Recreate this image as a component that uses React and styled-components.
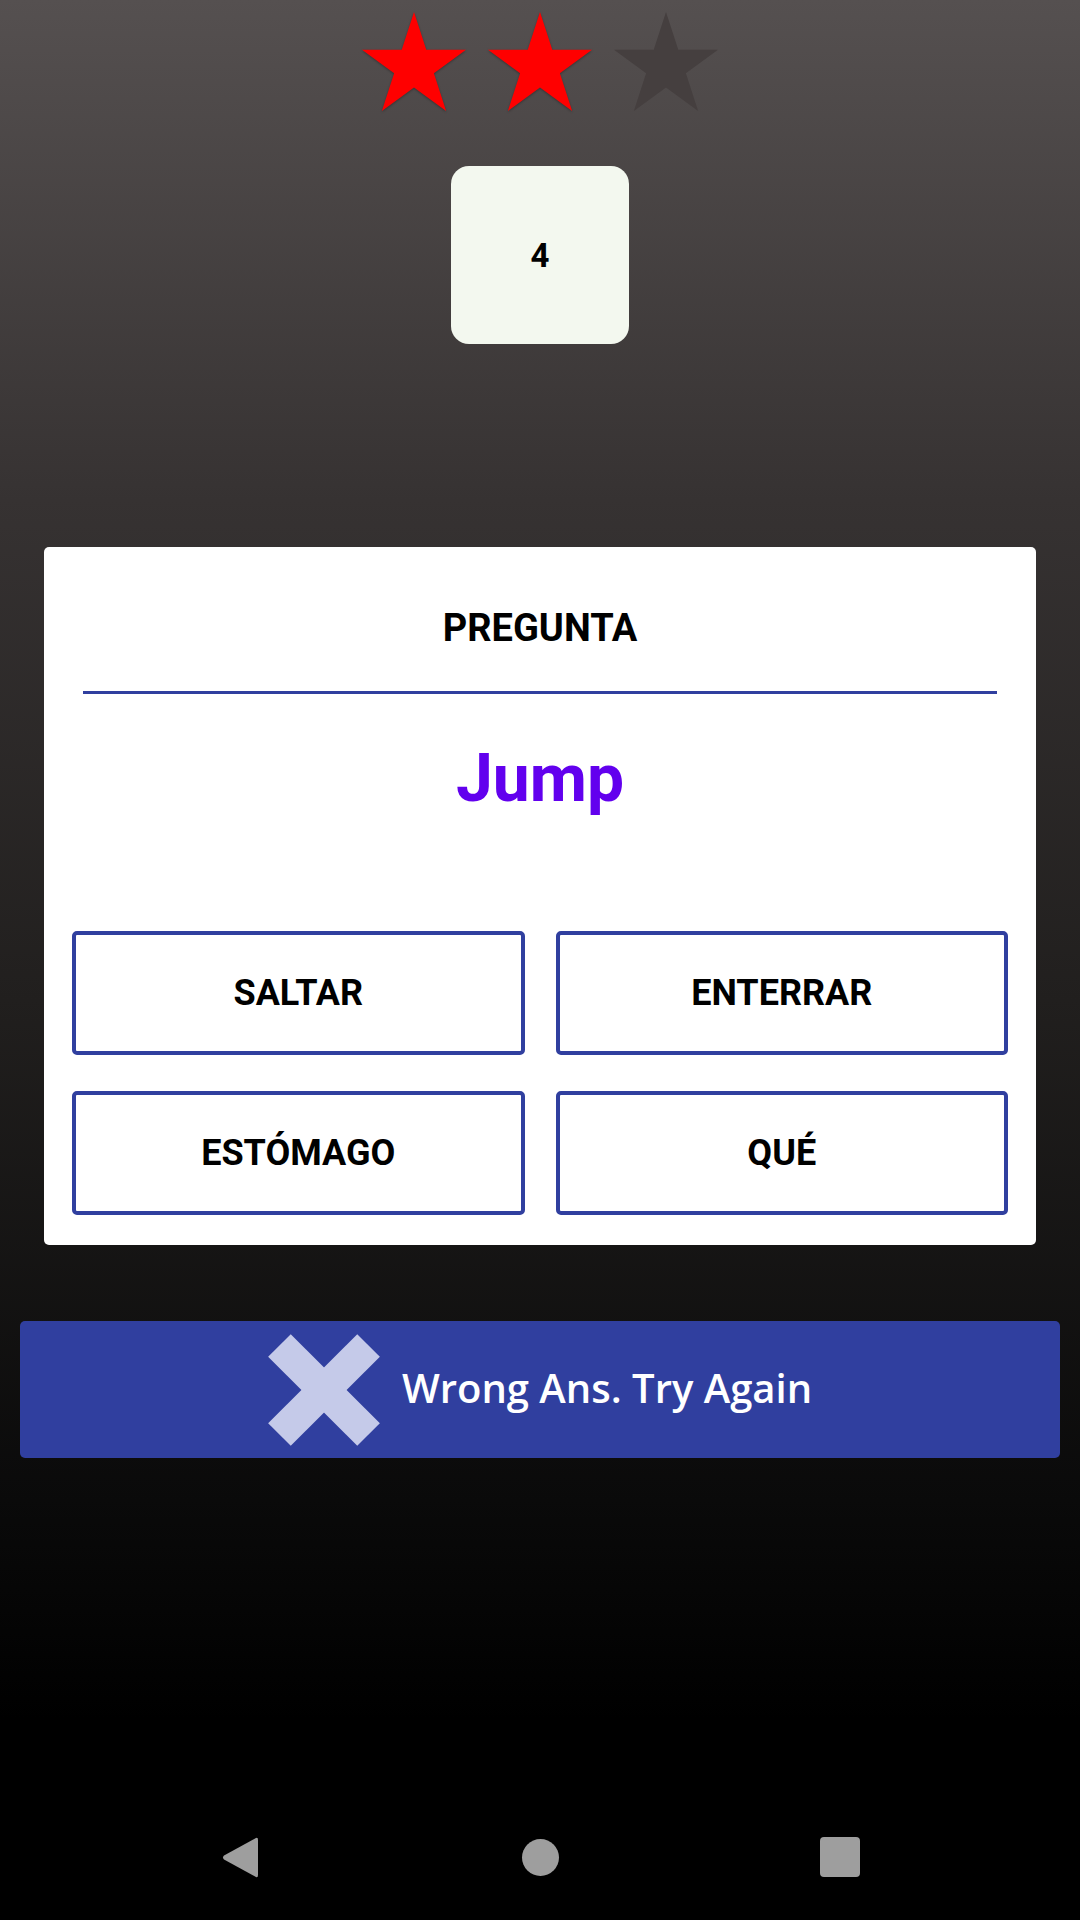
import styled, { createGlobalStyle } from "styled-components";

const GlobalStyle = createGlobalStyle`
  html, body {
    margin: 0;
    padding: 0;
    background: #000;
  }
  * {
    box-sizing: border-box;
  }
`;

const STAR_POINTS =
  "50,0 61.8,36.33 100,36.32 69.1,58.78 80.9,95.1 50,72.65 19.1,95.1 30.9,58.78 0,36.32 38.2,36.33";

const options = ["SALTAR", "ENTERRAR", "ESTÓMAGO", "QUÉ"];

function Star({ filled }) {
  return (
    <StarSvg viewBox="0 0 100 95.1" $filled={filled}>
      <polygon points={STAR_POINTS} />
    </StarSvg>
  );
}

function CrossIcon() {
  return (
    <CrossSvg viewBox="0 0 112 112">
      <rect x="-7" y="40" width="126" height="32" transform="rotate(45 56 56)" />
      <rect x="-7" y="40" width="126" height="32" transform="rotate(-45 56 56)" />
    </CrossSvg>
  );
}

export default function App() {
  return (
    <>
      <GlobalStyle />
      <Screen>
        <Content>
          <StarsRow>
            <Star filled />
            <Star filled />
            <Star />
          </StarsRow>
          <Counter>4</Counter>
          <QuestionCard>
            <CardTitle>PREGUNTA</CardTitle>
            <Divider />
            <Word>Jump</Word>
            <OptionsGrid>
              {options.map((o) => (
                <OptionButton key={o}>{o}</OptionButton>
              ))}
            </OptionsGrid>
          </QuestionCard>
          <ResultBanner>
            <CrossIcon />
            <ResultText>Wrong Ans. Try Again</ResultText>
          </ResultBanner>
        </Content>
        <NavBar>
          <NavSlot>
            <svg width="38" height="43" viewBox="0 0 38 43">
              <path
                d="M35 2 Q37 1 37 4 L37 39 Q37 42 35 41 L3 23.5 Q1 21.5 3 19.5 Z"
                fill="#9e9e9e"
              />
            </svg>
          </NavSlot>
          <NavSlot>
            <HomeDot />
          </NavSlot>
          <NavSlot>
            <RecentSquare />
          </NavSlot>
        </NavBar>
      </Screen>
    </>
  );
}

const Screen = styled.div`
  width: 1080px;
  height: 1920px;
  display: flex;
  flex-direction: column;
  background: linear-gradient(
    to bottom,
    #555050 0px,
    #363232 500px,
    #211f1e 1000px,
    #0a0a0a 1500px,
    #000 1720px
  );
  font-family: Roboto, "Liberation Sans", sans-serif;
`;

const Content = styled.div`
  flex: 1;
  display: flex;
  flex-direction: column;
  align-items: center;
  padding-top: 12px;
`;

const StarsRow = styled.div`
  display: flex;
  gap: 22px;
`;

const StarSvg = styled.svg`
  width: 104px;
  height: 99px;
  display: block;
  fill: ${(p) => (p.$filled ? "#ff0000" : "#453f3f")};
  filter: ${(p) => (p.$filled ? "drop-shadow(0 1px 1px rgba(0,0,0,0.3))" : "none")};
`;

const Counter = styled.div`
  margin-top: 55px;
  width: 178px;
  height: 178px;
  border-radius: 18px;
  background: #f3f8ef;
  display: flex;
  align-items: center;
  justify-content: center;
  font-size: 33px;
  font-weight: 700;
  color: #000;
`;

const QuestionCard = styled.div`
  margin-top: 203px;
  width: 992px;
  background: #fff;
  border-radius: 5px;
  padding: 62px 28px 30px;
  display: flex;
  flex-direction: column;
`;

const CardTitle = styled.div`
  text-align: center;
  font-size: 38px;
  line-height: 38px;
  font-weight: 700;
  color: #000;
`;

const Divider = styled.div`
  margin: 44px 11px 0;
  height: 3px;
  background: #303f9f;
`;

const Word = styled.div`
  margin-top: 52px;
  text-align: center;
  font-size: 66px;
  line-height: 66px;
  font-weight: 700;
  color: #6200ee;
`;

const OptionsGrid = styled.div`
  margin-top: 119px;
  display: grid;
  grid-template-columns: 1fr 1fr;
  column-gap: 31px;
  row-gap: 36px;
`;

const OptionButton = styled.div`
  height: 124px;
  border: 4px solid #303f9f;
  border-radius: 5px;
  display: flex;
  align-items: center;
  justify-content: center;
  font-size: 36px;
  font-weight: 700;
  color: #000;
`;

const ResultBanner = styled.div`
  margin-top: 76px;
  width: 1040px;
  height: 137px;
  background: #303f9f;
  border-radius: 5px;
  display: flex;
  align-items: center;
  justify-content: center;
  gap: 22px;
`;

const CrossSvg = styled.svg`
  width: 112px;
  height: 112px;
  display: block;
  fill: #c5cae9;
`;

const ResultText = styled.span`
  font-family: "Open Sans", "DejaVu Sans", sans-serif;
  font-size: 40px;
  font-weight: 600;
  color: #fff;
  margin-top: -4px;
`;

const NavBar = styled.div`
  height: 126px;
  background: #000;
  display: flex;
  align-items: center;
  justify-content: center;
  gap: 258px;
`;

const NavSlot = styled.div`
  width: 42px;
  height: 44px;
  display: flex;
  align-items: center;
  justify-content: center;
`;

const HomeDot = styled.div`
  width: 37px;
  height: 37px;
  border-radius: 50%;
  background: #9e9e9e;
`;

const RecentSquare = styled.div`
  width: 40px;
  height: 40px;
  border-radius: 4px;
  background: #9e9e9e;
`;
